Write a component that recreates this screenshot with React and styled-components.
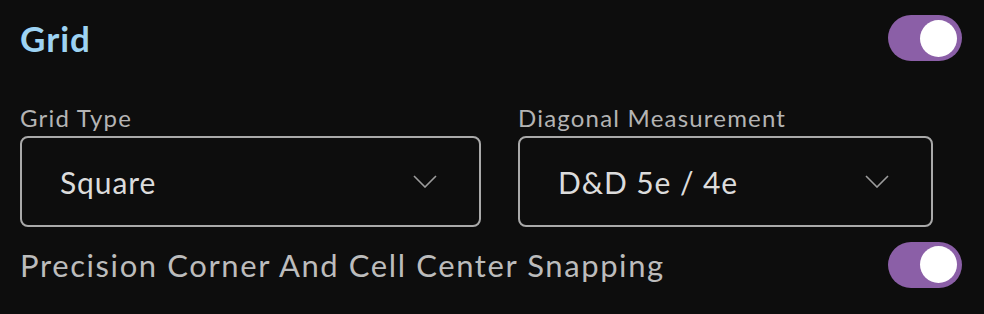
import React from 'react';
import styled, { createGlobalStyle } from 'styled-components';

const GlobalStyle = createGlobalStyle`
  html, body {
    margin: 0;
    padding: 0;
    background: #0d0d0d;
  }
  body {
    font-family: Lato, 'Open Sans', sans-serif;
  }
`;

const Panel = styled.div`
  width: 984px;
  height: 314px;
  box-sizing: border-box;
  padding: 15px 22px 0 20px;
  background: #0d0d0d;
`;

const Row = styled.div`
  display: flex;
  align-items: center;
  justify-content: space-between;
  height: ${({ h }) => h}px;
`;

const Title = styled.h2`
  margin: 0;
  font-size: 35px;
  font-weight: 700;
  letter-spacing: 1px;
  color: #9dd3f3;
`;

const Fields = styled.div`
  display: flex;
  gap: 37px;
  margin: 42px 0 15px 0;
`;

const Field = styled.div`
  display: flex;
  flex-direction: column;
  gap: 3px;
  width: ${({ w }) => w}px;
`;

const Label = styled.label`
  font-size: 24px;
  line-height: 30px;
  letter-spacing: 1.2px;
  color: #b4b4b4;
`;

const Select = styled.div`
  height: 91px;
  box-sizing: border-box;
  border: 2px solid #a9a9a9;
  border-radius: 8px;
  display: flex;
  align-items: center;
  justify-content: space-between;
  padding: 0 42px 0 38px;
  font-size: 30px;
  letter-spacing: 0.9px;
  color: #dcdcdc;
  svg {
    width: 24px;
    height: 13px;
  }
`;

const Text = styled.span`
  font-size: 31px;
  letter-spacing: 1.6px;
  color: #bcbcbc;
`;

const Switch = styled.div`
  width: 74px;
  height: 46px;
  box-sizing: border-box;
  border-radius: 23px;
  background: #8b5fa7;
  display: flex;
  align-items: center;
  justify-content: flex-end;
  padding: 0 5px;
  &::after {
    content: '';
    width: 37px;
    height: 37px;
    border-radius: 50%;
    background: #fff;
  }
`;

const Chevron = () => (
  <svg viewBox="0 0 24 13" fill="none">
    <polyline points="1,1 12,12 23,1" stroke="#9c9c9c" strokeWidth="1.6" />
  </svg>
);

const SelectField = ({ label, value, width }) => (
  <Field w={width}>
    <Label>{label}</Label>
    <Select>
      <span>{value}</span>
      <Chevron />
    </Select>
  </Field>
);

export default function App() {
  return (
    <Panel>
      <GlobalStyle />
      <Row h={46}>
        <Title>Grid</Title>
        <Switch />
      </Row>
      <Fields>
        <SelectField label="Grid Type" value="Square" width={461} />
        <SelectField label="Diagonal Measurement" value="D&D 5e / 4e" width={415} />
      </Fields>
      <Row h={45}>
        <Text>Precision Corner And Cell Center Snapping</Text>
        <Switch />
      </Row>
    </Panel>
  );
}
